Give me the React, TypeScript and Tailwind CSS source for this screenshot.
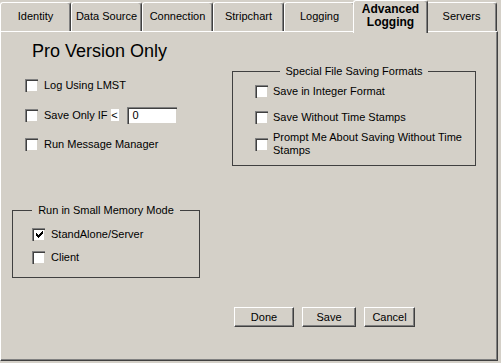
import React from "react";

const Check = ({ checked = false }: { checked?: boolean }) => (
  <div className="w-[13px] h-[13px] shrink-0 bg-white border-t border-l border-[#808080] border-r-white border-b-white shadow-[inset_1px_1px_0_#404040,inset_-1px_-1px_0_#d4d0c8] flex items-center justify-center">
    {checked && (
      <svg width="7" height="7" viewBox="0 0 7 7" shapeRendering="crispEdges">
        <path d="M0 2h1v3h-1zM1 3h1v3h-1zM2 4h1v3h-1zM3 3h1v3h-1zM4 2h1v3h-1zM5 1h1v3h-1zM6 0h1v3h-1z" fill="#000" />
      </svg>
    )}
  </div>
);

const Tab = ({ label, selected = false }: { label: React.ReactNode; selected?: boolean }) =>
  selected ? (
    <div className="relative z-10 -mx-[2px] w-[75px] h-[33px] bg-[#d4d0c8] border-l border-t border-white border-r border-r-[#404040] rounded-t-[3px] shadow-[inset_-1px_0_0_#808080] flex items-center justify-center text-center text-[12px] leading-[13px] font-bold pb-[2px]">
      {label}
    </div>
  ) : (
    <div className="mt-[2px] w-[71px] h-[29px] bg-[#d4d0c8] border-l border-t border-white border-r border-r-[#404040] rounded-t-[3px] shadow-[inset_-1px_0_0_#808080] flex items-center justify-center text-[11px] pb-[1px]">
      {label}
    </div>
  );

const Button = ({ label, w }: { label: string; w: string }) => (
  <div className={`${w} h-[20px] bg-[#d4d0c8] border-t border-l border-white border-r border-b border-r-[#404040] border-b-[#404040] shadow-[inset_-1px_-1px_0_#808080] flex items-center justify-center text-[11px]`}>
    {label}
  </div>
);

export default function App() {
  return (
    <div
      className="w-[501px] h-[363px] bg-[#d4d0c8] text-black overflow-hidden"
      style={{ fontFamily: '"Liberation Sans", Arial, sans-serif' }}
    >
      <div className="flex h-[31px] items-start">
        <Tab label="Identity" />
        <Tab label="Data Source" />
        <Tab label="Connection" />
        <Tab label="Stripchart" />
        <Tab label="Logging" />
        <Tab selected label={<span>Advanced<br />Logging</span>} />
        <Tab label="Servers" />
      </div>
      <div className="w-[498px] h-[330px] border-l border-t border-white border-r border-b border-r-[#404040] border-b-[#404040] shadow-[inset_-1px_-1px_0_#808080] flex flex-col text-[11px]">
        <div className="flex">
          <div className="w-[231px] flex flex-col">
            <div className="ml-[31px] mt-[9px] h-[20px] leading-[20px] text-[18px]">Pro Version Only</div>
            <div className="ml-[24px] mt-[16px] h-[16px] flex items-center gap-[6px]">
              <Check />
              <span>Log Using LMST</span>
            </div>
            <div className="ml-[24px] mt-[13px] h-[18px] flex items-center">
              <Check />
              <span className="ml-[6px]">Save Only IF</span>
              <span className="ml-[3px] bg-white h-[12px] w-[8px] flex items-center justify-center leading-none">&lt;</span>
              <div className="ml-[8px] w-[50px] h-[17px] bg-white border-t border-l border-[#808080] border-r-white border-b-white shadow-[inset_1px_1px_0_#404040,inset_-1px_-1px_0_#d4d0c8] flex items-center pl-[5px]">
                0
              </div>
            </div>
            <div className="ml-[24px] mt-[12px] h-[16px] flex items-center gap-[6px]">
              <Check />
              <span>Run Message Manager</span>
            </div>
          </div>
          <div className="relative mt-[39px] w-[244px] h-[95px] border border-[#404040]">
            <div className="absolute -top-[7px] left-0 right-0 flex justify-center">
              <span className="bg-[#d4d0c8] px-[6px] leading-[13px]">Special File Saving Formats</span>
            </div>
            <div className="ml-[22px] mt-[12px] flex flex-col">
              <div className="h-[14px] flex items-center gap-[5px]">
                <Check />
                <span>Save in Integer Format</span>
              </div>
              <div className="mt-[12px] h-[14px] flex items-center gap-[5px]">
                <Check />
                <span>Save Without Time Stamps</span>
              </div>
              <div className="mt-[7px] flex items-center gap-[5px]">
                <Check />
                <span className="w-[195px] leading-[13px]">Prompt Me About Saving Without Time Stamps</span>
              </div>
            </div>
          </div>
        </div>
        <div className="relative ml-[11px] mt-[44px] w-[188px] h-[68px] border border-[#404040]">
          <div className="absolute -top-[7px] left-0 right-0 flex justify-center">
            <span className="bg-[#d4d0c8] px-[6px] leading-[13px]">Run in Small Memory Mode</span>
          </div>
          <div className="ml-[19px] mt-[16px] h-[14px] flex items-center gap-[6px]">
            <Check checked />
            <span>StandAlone/Server</span>
          </div>
          <div className="ml-[19px] mt-[9px] h-[14px] flex items-center gap-[6px]">
            <Check />
            <span>Client</span>
          </div>
        </div>
        <div className="ml-[233px] mt-[29px] flex gap-[8px]">
          <Button label="Done" w="w-[60px]" />
          <Button label="Save" w="w-[54px]" />
          <Button label="Cancel" w="w-[51px]" />
        </div>
      </div>
    </div>
  );
}
